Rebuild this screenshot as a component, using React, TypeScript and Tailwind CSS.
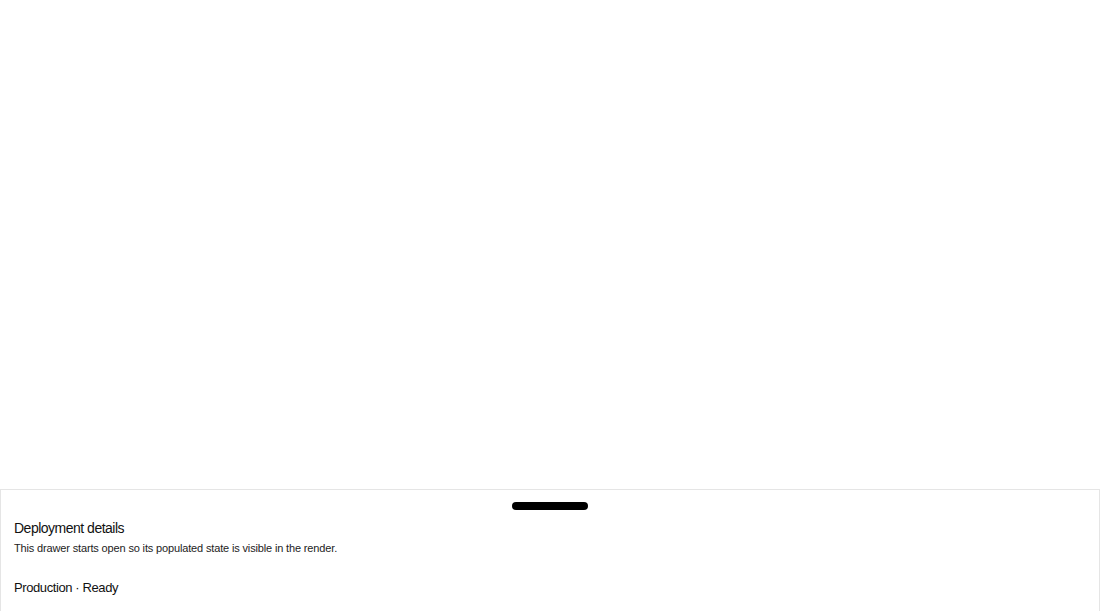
export default function App() {
  return (
    <div className="h-[611px] w-full overflow-hidden bg-white" style={{ fontFamily: '"Liberation Sans", Arial, sans-serif' }}>
      <div className="fixed left-0 right-0 top-[489px] h-[200px] border border-[#e5e5e5] bg-white">
        <div className="mx-auto mt-3 h-2 w-[76px] rounded-full bg-black" />
        <div className="px-[13px] pt-[6px]">
          <h2 className="text-[14px] leading-6 tracking-[-0.5px] text-[#111]">Deployment details</h2>
          <p className="text-[11px] leading-4 tracking-[-0.15px] text-[#222]">This drawer starts open so its populated state is visible in the render.</p>
          <div className="mt-[22px] text-[13px] leading-5 tracking-[-0.4px] text-[#111]">Production · Ready</div>
        </div>
      </div>
    </div>
  );
}
